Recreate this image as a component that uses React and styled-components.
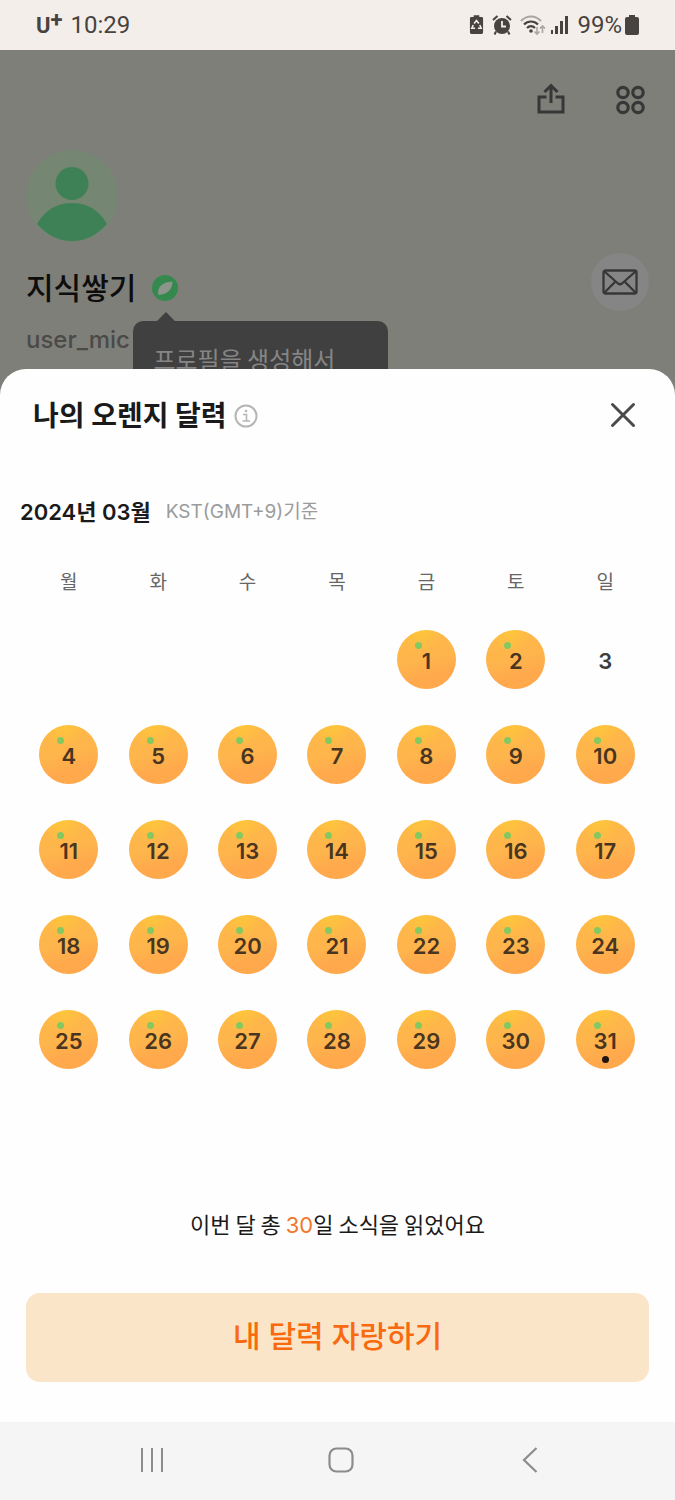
import React from 'react'
import styled, { createGlobalStyle } from 'styled-components'

const GlobalStyle = createGlobalStyle`
    * {
        box-sizing: border-box;
    }

    body {
        margin: 0;
        background-color: #7f7f79;
        font-family: Inter, "Noto Sans CJK KR", sans-serif;
        color: #1a1a1a;
    }

    button {
        font-family: inherit;
        border: none;
        padding: 0;
        background-color: transparent;
        cursor: pointer;
    }

    svg {
        display: block;
    }
`;

const Screen = styled.div`
    display: flex;
    flex-flow: column nowrap;
    min-height: 100vh;
`;

/* Status bar */
const StatusBar = styled.header`
    display: flex;
    align-items: center;
    justify-content: space-between;
    height: 50px;
    padding: 0 36px;
    background-color: #f4eeea;
    color: #474340;
    font-family: Roboto, sans-serif;
    font-size: 24px;
    line-height: 28px;
`;

const StatusGroup = styled.div`
    display: flex;
    align-items: center;
    gap: ${props => props.gap}px;
`;

const Carrier = styled.span`
    display: flex;
    align-items: flex-start;
    padding-top: 2px;
    font-weight: 700;
    font-size: 22px;

    sup {
        font-size: 22px;
        line-height: 16px;
    }
`;

/* Profile behind the sheet */
const Profile = styled.section`
    height: 344px;
    padding: 32px 26px 0 26px;
`;

const Toolbar = styled.div`
    display: flex;
    justify-content: flex-end;
    gap: 44px;
    height: 44px;
`;

const IconButton = styled.button`
    display: flex;
    align-items: center;
    justify-content: center;
    width: ${props => props.size}px;
    height: ${props => props.size}px;
    border-radius: 50%;
    background-color: ${props => props.fill || 'transparent'};
`;

const Avatar = styled.div`
    width: 92px;
    height: 92px;
    margin-top: 24px;
    border-radius: 50%;
    background-color: #758672;
    overflow: hidden;
`;

const NameRow = styled.div`
    display: flex;
    align-items: center;
    justify-content: space-between;
    height: 60px;
    margin-top: 10px;
`;

const NameGroup = styled.div`
    display: flex;
    align-items: center;
    gap: 16px;
    padding-top: 12px;
`;

const Name = styled.h1`
    margin: 0;
    font-size: 30px;
    font-weight: 500;
    line-height: 40px;
    color: #0d0d0d;
`;

const BadgeAnchor = styled.span`
    position: relative;
`;

const Tooltip = styled.div`
    position: absolute;
    top: 46px;
    left: -19px;
    width: 255px;
    height: 96px;
    padding: 20px;
    border-radius: 10px;
    background-color: #404040;
    color: #858585;
    font-family: "Noto Sans CJK KR", sans-serif;
    font-size: 24px;
    line-height: 36px;
    white-space: nowrap;

    &::before {
        content: "";
        position: absolute;
        top: -6px;
        left: 26px;
        width: 14px;
        height: 14px;
        background-color: #404040;
        transform: rotate(45deg);
    }
`;

const UserId = styled.p`
    margin: 12px 0 0 0;
    font-size: 24px;
    font-weight: 500;
    line-height: 32px;
    color: #4a4a48;
`;

/* Sheet */
const Sheet = styled.main`
    position: relative;
    z-index: 2;
    display: flex;
    flex: 1;
    flex-flow: column nowrap;
    margin-top: -25px;
    border-radius: 26px 26px 0 0;
    background-color: #fefefe;
`;

const SheetHeader = styled.div`
    display: flex;
    align-items: center;
    justify-content: space-between;
    padding: 24px 36px 0 33px;
`;

const TitleGroup = styled.div`
    display: flex;
    align-items: center;
    gap: 7px;
    padding-top: 2px;
`;

const Title = styled.h2`
    margin: 0;
    font-size: 28px;
    font-weight: 700;
    line-height: 42px;
`;

const MonthRow = styled.div`
    display: flex;
    align-items: center;
    gap: 15px;
    padding: 59px 20px 0 20px;
    line-height: 32px;
`;

const Month = styled.h3`
    margin: 0;
    font-size: 22px;
    font-weight: 600;
`;

const TimeZone = styled.span`
    font-size: 19px;
    color: #9b9b9b;
`;

const CalendarWrap = styled.div`
    padding: 40px 25px 0 24px;
`;

const Calendar = styled.table`
    width: 100%;
    table-layout: fixed;
    border-collapse: collapse;
`;

const Weekday = styled.th`
    height: 44px;
    padding: 0 0 14px 0;
    font-size: 19px;
    font-weight: 400;
    line-height: 30px;
    color: #666;
`;

const DayCell = styled.td`
    height: 95px;
    padding: 0;
`;

const Day = styled.div`
    position: relative;
    display: flex;
    align-items: center;
    justify-content: center;
    width: 59px;
    height: 59px;
    margin: 0 auto;
    padding-top: 2px;
    border-radius: 50%;
    font-size: 22px;
    font-weight: 600;
    line-height: 28px;
    color: ${props => props.$read ? '#4a3520' : '#3d3d3d'};
    background-image: ${props => props.$read
        ? 'radial-gradient(circle at 40% 0%, #fec63a 0%, rgba(254,184,74,0) 32%), linear-gradient(165deg, #feb848 10%, #feb54c 48%, #ffa84c 75%)'
        : 'none'};
`;

const Leaf = styled.span`
    position: absolute;
    top: 12px;
    left: 18px;
    width: 7px;
    height: 7px;
    border-radius: 50%;
    background-color: #84c862;
`;

const TodayDot = styled.span`
    position: absolute;
    bottom: 6px;
    left: 26px;
    width: 7px;
    height: 7px;
    border-radius: 50%;
    background-color: #20160f;
`;

const Summary = styled.p`
    margin: 118px 0 0 0;
    font-family: "Noto Sans CJK KR", sans-serif;
    font-size: 22px;
    line-height: 36px;
    text-align: center;

    strong {
        font-family: Inter, sans-serif;
        font-weight: 400;
        color: #f4762a;
    }
`;

const ShareArea = styled.div`
    padding: 50px 26px 40px 26px;
`;

const ShareButton = styled.button`
    width: 100%;
    height: 89px;
    padding-bottom: 4px;
    border-radius: 14px;
    background-color: #fae5c9;
    color: #f9690e;
    font-size: 30px;
    font-weight: 500;
    line-height: 44px;
`;

/* System navigation */
const NavBar = styled.nav`
    position: relative;
    z-index: 2;
    display: flex;
    height: 78px;
    padding: 0 51px 2px 58px;
    background-color: #f5f5f5;
`;

const NavButton = styled.button`
    display: flex;
    flex: 1;
    align-items: center;
    justify-content: center;
`;

const WEEKDAYS = ['월', '화', '수', '목', '금', '토', '일'];
const UNREAD = [3];
const TODAY = 31;

//March 2024 starts on a friday
const WEEKS = [
    [null, null, null, null, 1, 2, 3],
    [4, 5, 6, 7, 8, 9, 10],
    [11, 12, 13, 14, 15, 16, 17],
    [18, 19, 20, 21, 22, 23, 24],
    [25, 26, 27, 28, 29, 30, 31],
];

function SaverIcon() {
    return (
        <svg width="15" height="20" viewBox="0 0 16 21">
            <path d="M5 0h6v2h2.500a1.500 1.500 0 0 1 1.500 1.500v15a1.500 1.500 0 0 1-1.500 1.500h-11a1.500 1.500 0 0 1-1.500-1.500v-15a1.500 1.500 0 0 1 1.500-1.500H5z" fill="#474340" />
            <path d="M5.500 9L8 5.800L10.500 9M11.500 10.500L13 14H9.500M6.500 14H3L4.500 10.500" fill="none" stroke="#f4eeea" strokeWidth="1.700" />
        </svg>
    )
}

function AlarmIcon() {
    return (
        <svg width="20" height="20" viewBox="0 0 20 20">
            <circle cx="10" cy="11" r="8" fill="#474340" />
            <path d="M1 5L5.500 1M19 5L14.500 1M4 16.500L2.500 19.500M16 16.500L17.500 19.500" stroke="#474340" strokeWidth="2" />
            <path d="M10 6v5.500h4" fill="none" stroke="#f4eeea" strokeWidth="1.800" />
        </svg>
    )
}

function WifiIcon() {
    return (
        <svg width="26" height="20" viewBox="0 0 26 20" fill="none">
            <path d="M1 6C7 0 15 0 21 6" stroke="#aaa5a1" strokeWidth="2" />
            <path d="M4 9.500C8 5.500 14 5.500 18 9.500" stroke="#474340" strokeWidth="2.200" />
            <path d="M7 13C9.500 10.500 12.500 10.500 15 13" stroke="#474340" strokeWidth="2.200" />
            <circle cx="11" cy="16" r="1.800" fill="#474340" />
            <path d="M17 12v7M14.500 16.500L17 19L19.500 16.500M22.500 18v-7M20 13.500L22.500 11L25 13.500" stroke="#aaa5a1" strokeWidth="1.600" />
        </svg>
    )
}

function SignalIcon() {
    return (
        <svg width="19" height="20" viewBox="0 0 19 20" fill="#474340">
            <rect x="1" y="15" width="2" height="4" />
            <rect x="5" y="11" width="3" height="8" />
            <rect x="10" y="6" width="3" height="13" />
            <rect x="15" y="1" width="3" height="18" />
        </svg>
    )
}

function BatteryIcon() {
    return (
        <svg width="14" height="21" viewBox="0 0 14 21">
            <path d="M4 0h6v2h2a2 2 0 0 1 2 2v14a2 2 0 0 1-2 2H2a2 2 0 0 1-2-2V4a2 2 0 0 1 2-2h2z" fill="#474340" />
        </svg>
    )
}

function ShareIcon() {
    return (
        <svg width="30" height="34" viewBox="0 0 30 34" fill="none" stroke="#373737" strokeWidth="3">
            <path d="M10.500 14H3v15h24V14h-7.500" />
            <path d="M15 20V3M8.500 9L15 2.500L21.500 9" />
        </svg>
    )
}

function MenuIcon() {
    return (
        <svg width="30" height="30" viewBox="0 0 30 30" fill="none" stroke="#373737" strokeWidth="3.200">
            <circle cx="7" cy="7.500" r="5.200" />
            <circle cx="22" cy="7.500" r="5.200" />
            <circle cx="7" cy="22.500" r="5.200" />
            <circle cx="22" cy="22.500" r="5.200" />
        </svg>
    )
}

function PersonIcon() {
    return (
        <svg width="92" height="92" viewBox="0 0 92 92" fill="#3f8156">
            <circle cx="46" cy="33.500" r="16.500" />
            <path d="M11 74C19 60 31 53 46 53S73 60 81 74C71 85 60 91 46 91S21 85 11 74z" />
        </svg>
    )
}

function LeafBadge() {
    return (
        <svg width="26" height="26" viewBox="0 0 26 26">
            <circle cx="13" cy="13" r="13" fill="#35894f" />
            <path d="M6.500 20C4.500 13 9.500 7 20.500 6.500C20.500 14 15.500 19.500 6.500 20z" fill="#8d9489" />
        </svg>
    )
}

function MailIcon() {
    return (
        <svg width="36" height="26" viewBox="0 0 36 26" fill="none" stroke="#373737" strokeWidth="2.300" strokeLinejoin="round">
            <rect x="1.500" y="1.500" width="33" height="23" rx="2" />
            <path d="M2.500 2.500L16 14.500Q18 16 20 14.500L33.500 2.500M2.500 23.500L13.500 12.500M33.500 23.500L22.500 12.500" />
        </svg>
    )
}

function InfoIcon() {
    return (
        <svg width="24" height="24" viewBox="0 0 24 24" fill="none" stroke="#b5b5b5" strokeWidth="2">
            <circle cx="12" cy="12" r="10.500" />
            <path d="M9 10.500h3.500V17M8.500 17h7.500" strokeWidth="1.600" />
            <circle cx="12" cy="7" r="1.300" fill="#b5b5b5" stroke="none" />
        </svg>
    )
}

function CloseIcon() {
    return (
        <svg width="26" height="26" viewBox="0 0 26 26" stroke="#4a4a4a" strokeWidth="3" strokeLinecap="round">
            <path d="M2.500 2.500L23.500 23.500M23.500 2.500L2.500 23.500" />
        </svg>
    )
}

function App() {
    return (
        <>
            <GlobalStyle />
            <Screen>
                <StatusBar>
                    <StatusGroup gap={8}>
                        <Carrier>U<sup>+</sup></Carrier>
                        <span>10:29</span>
                    </StatusGroup>
                    <StatusGroup gap={8}>
                        <StatusGroup gap={8}>
                            <SaverIcon />
                            <AlarmIcon />
                        </StatusGroup>
                        <StatusGroup gap={4}>
                            <WifiIcon />
                            <SignalIcon />
                        </StatusGroup>
                        <StatusGroup gap={3}>
                            <span>99%</span>
                            <BatteryIcon />
                        </StatusGroup>
                    </StatusGroup>
                </StatusBar>

                <Profile>
                    <Toolbar>
                        <IconButton size={36} aria-label="공유"><ShareIcon /></IconButton>
                        <IconButton size={36} aria-label="메뉴"><MenuIcon /></IconButton>
                    </Toolbar>
                    <Avatar><PersonIcon /></Avatar>
                    <NameRow>
                        <NameGroup>
                            <Name>지식쌓기</Name>
                            <BadgeAnchor>
                                <LeafBadge />
                                <Tooltip role="tooltip">프로필을 생성해서</Tooltip>
                            </BadgeAnchor>
                        </NameGroup>
                        <IconButton size={58} fill="#858585" aria-label="메시지"><MailIcon /></IconButton>
                    </NameRow>
                    <UserId>user_mic</UserId>
                </Profile>

                <Sheet>
                    <SheetHeader>
                        <TitleGroup>
                            <Title>나의 오렌지 달력</Title>
                            <IconButton size={24} aria-label="안내"><InfoIcon /></IconButton>
                        </TitleGroup>
                        <IconButton size={32} aria-label="닫기"><CloseIcon /></IconButton>
                    </SheetHeader>

                    <MonthRow>
                        <Month>2024년 03월</Month>
                        <TimeZone>KST(GMT+9)기준</TimeZone>
                    </MonthRow>

                    <CalendarWrap>
                        <Calendar>
                            <thead>
                                <tr>
                                    {WEEKDAYS.map(day => <Weekday key={day} scope="col">{day}</Weekday>)}
                                </tr>
                            </thead>
                            <tbody>
                                {WEEKS.map((week, i) => (
                                    <tr key={i}>
                                        {week.map((day, j) => {
                                            const read = !UNREAD.includes(day);
                                            return (
                                                <DayCell key={j}>
                                                    {day && (
                                                        <Day $read={read}>
                                                            {read && <Leaf />}
                                                            {day}
                                                            {day === TODAY && <TodayDot />}
                                                        </Day>
                                                    )}
                                                </DayCell>
                                            )
                                        })}
                                    </tr>
                                ))}
                            </tbody>
                        </Calendar>
                    </CalendarWrap>

                    <Summary>이번 달 총 <strong>30</strong>일 소식을 읽었어요</Summary>
                    <ShareArea>
                        <ShareButton>내 달력 자랑하기</ShareButton>
                    </ShareArea>
                </Sheet>

                <NavBar>
                    <NavButton aria-label="최근 앱">
                        <svg width="24" height="26" viewBox="0 0 24 26" stroke="#8c8c8c" strokeWidth="2">
                            <path d="M2 1v24M12 1v24M22 1v24" />
                        </svg>
                    </NavButton>
                    <NavButton aria-label="홈">
                        <svg width="26" height="26" viewBox="0 0 26 26" fill="none" stroke="#8c8c8c" strokeWidth="2.200">
                            <rect x="1.500" y="1.500" width="23" height="23" rx="7" />
                        </svg>
                    </NavButton>
                    <NavButton aria-label="뒤로">
                        <svg width="16" height="28" viewBox="0 0 16 28" fill="none" stroke="#8c8c8c" strokeWidth="2.200">
                            <path d="M14.500 2L2 14L14.500 26" />
                        </svg>
                    </NavButton>
                </NavBar>
            </Screen>
        </>
    )
}

export default App
